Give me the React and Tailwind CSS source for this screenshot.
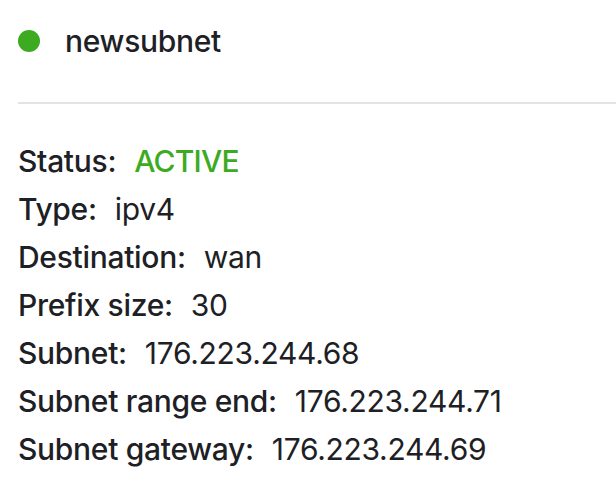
import React from 'react';

const rows = [
  { label: 'Status', value: 'ACTIVE', status: true },
  { label: 'Type', value: 'ipv4' },
  { label: 'Destination', value: 'wan' },
  { label: 'Prefix size', value: '30' },
  { label: 'Subnet', value: '176.223.244.68' },
  { label: 'Subnet range end', value: '176.223.244.71' },
  { label: 'Subnet gateway', value: '176.223.244.69' },
];

const App = () => {
  return (
    <div className="min-h-screen bg-white pl-[18px] text-[#1d2024]" style={{ fontFamily: 'Inter, "Noto Sans", sans-serif' }}>
      {/* Header */}
      <div className="mb-[20px] flex h-[82px] items-center">
        <span className="h-[22px] w-[22px] rounded-full bg-[#3cab21]" />
        <h1 className="ml-[25px] text-[30px] font-medium tracking-[-0.3px]">newsubnet</h1>
      </div>
      <div className="h-[2px] bg-[#e3e3e3]" />

      {/* Details */}
      <div className="pt-[33px]">
        {rows.map((row) => (
          <div key={row.label} className="flex h-[48px] items-center text-[30px] tracking-[-0.3px]">
            <span className="font-medium">{row.label}:</span>
            <span className={`ml-[18px] ${row.status ? 'font-medium tracking-[-0.8px] text-[#3cab21]' : ''}`}>
              {row.value}
            </span>
          </div>
        ))}
      </div>
    </div>
  );
};

export default App;
